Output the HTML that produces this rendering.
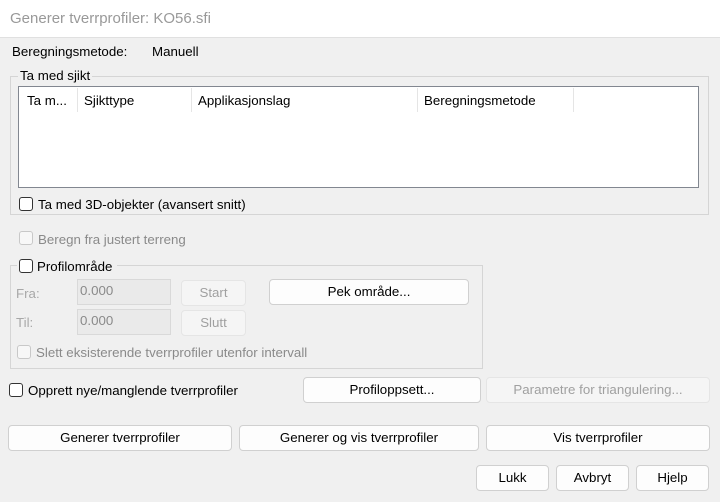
<!DOCTYPE html><html><head><style>
body{margin:0;width:720px;height:502px;background:#f0f0f0;font-family:"Liberation Sans",sans-serif;font-size:13.3px;color:#000;position:relative;overflow:hidden}
div{position:absolute;box-sizing:border-box}
.t{white-space:nowrap}
.btn{background:#fdfdfd;border:1px solid #d0d0d0;border-radius:4px;text-align:center;line-height:24px}
.dis{background:#f5f5f5;border:1px solid #e5e5e5;color:#a0a0a0}
.cb{width:14px;height:14px;border:1px solid #333;border-radius:3px;background:#fff}
.cbd{border-color:#c8c8c8;background:#f7f7f7}
.g{color:#8a8a8a}
.tb{background:#eaeaea;border:1px solid #d9d9d9;color:#8a8a8a;padding:3px 0 0 2px}
.grp{border:1px solid #d5d5d5}
</style></head><body>
<div style="left:0;top:0;width:720px;height:38px;background:#fff;border-bottom:1px solid #e0e0e0"></div>
<div class="t" style="left:10px;top:10px;font-size:15px;color:#999">Generer tverrprofiler: KO56.sfi</div>
<div class="t" style="left:12px;top:44px">Beregningsmetode:</div>
<div class="t" style="left:152px;top:44px">Manuell</div>
<div class="grp" style="left:10px;top:76px;width:699px;height:139px"></div>
<div class="t" style="left:18px;top:68px;background:#f0f0f0;padding:0 2px">Ta med sjikt</div>
<div style="left:18px;top:86px;width:681px;height:102px;background:#fff;border:1px solid #828790"></div>
<div class="t" style="left:27px;top:93px">Ta m...</div>
<div class="t" style="left:84px;top:93px">Sjikttype</div>
<div class="t" style="left:198px;top:93px">Applikasjonslag</div>
<div class="t" style="left:424px;top:93px">Beregningsmetode</div>
<div style="left:77px;top:88px;width:1px;height:24px;background:#e5e5e5"></div>
<div style="left:191px;top:88px;width:1px;height:24px;background:#e5e5e5"></div>
<div style="left:417px;top:88px;width:1px;height:24px;background:#e5e5e5"></div>
<div style="left:573px;top:88px;width:1px;height:24px;background:#e5e5e5"></div>
<div class="cb" style="left:19px;top:197px"></div>
<div class="t" style="left:38px;top:197px">Ta med 3D-objekter (avansert snitt)</div>
<div class="cb cbd" style="left:19px;top:231px"></div>
<div class="t g" style="left:38px;top:232px">Beregn fra justert terreng</div>
<div class="grp" style="left:10px;top:265px;width:473px;height:104px"></div>
<div style="left:17px;top:258px;width:100px;height:16px;background:#f0f0f0"></div>
<div class="cb" style="left:19px;top:259px"></div>
<div class="t" style="left:37px;top:259px">Profilområde</div>
<div class="t g" style="left:16px;top:286px;color:#a8a8a8">Fra:</div>
<div class="t g" style="left:16px;top:315px;color:#a8a8a8">Til:</div>
<div class="tb" style="left:77px;top:279px;width:94px;height:26px">0.000</div>
<div class="tb" style="left:77px;top:309px;width:94px;height:26px">0.000</div>
<div class="btn dis" style="left:181px;top:280px;width:65px;height:26px">Start</div>
<div class="btn dis" style="left:181px;top:310px;width:65px;height:26px">Slutt</div>
<div class="btn" style="left:269px;top:279px;width:200px;height:26px">Pek område...</div>
<div class="cb cbd" style="left:17px;top:345px"></div>
<div class="t g" style="left:36px;top:345px">Slett eksisterende tverrprofiler utenfor intervall</div>
<div class="cb" style="left:9px;top:383px"></div>
<div class="t" style="left:28px;top:383px">Opprett nye/manglende tverrprofiler</div>
<div class="btn" style="left:303px;top:377px;width:178px;height:26px">Profiloppsett...</div>
<div class="btn dis" style="left:486px;top:377px;width:224px;height:26px">Parametre for triangulering...</div>
<div class="btn" style="left:8px;top:425px;width:224px;height:26px">Generer tverrprofiler</div>
<div class="btn" style="left:239px;top:425px;width:240px;height:26px">Generer og vis tverrprofiler</div>
<div class="btn" style="left:486px;top:425px;width:224px;height:26px">Vis tverrprofiler</div>
<div class="btn" style="left:476px;top:465px;width:73px;height:26px">Lukk</div>
<div class="btn" style="left:556px;top:465px;width:73px;height:26px">Avbryt</div>
<div class="btn" style="left:636px;top:465px;width:73px;height:26px">Hjelp</div>
</body></html>
